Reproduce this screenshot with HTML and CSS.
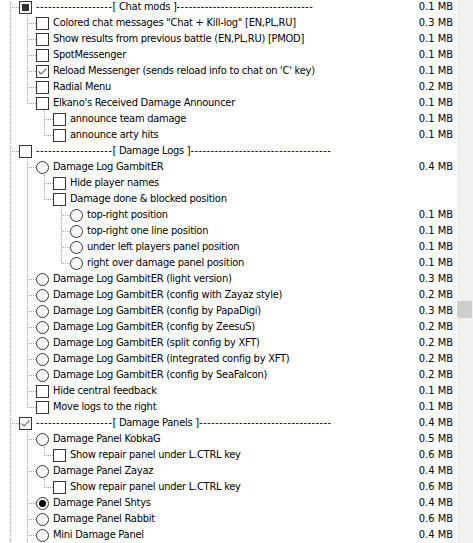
FILE: index.html
```html
<!DOCTYPE html>
<html>
<head>
<meta charset="utf-8">
<link rel="stylesheet" href="styles.css">
</head>
<body>
<div class="view">
  <div class="tree">
    <div class="row"><span class="g tee"></span><span class="cb mixed"></span><span class="lbl"><span class="dash">-------------------</span>[ Chat mods ]<span class="dash">----------------------------------</span></span><span class="size">0.1 MB</span></div>
    <div class="row"><span class="g pipe"></span><span class="g tee"></span><span class="cb"></span><span class="lbl">Colored chat messages "Chat + Kill-log" [EN,PL,RU]</span><span class="size">0.3 MB</span></div>
    <div class="row"><span class="g pipe"></span><span class="g tee"></span><span class="cb"></span><span class="lbl">Show results from previous battle (EN,PL,RU) [PMOD]</span><span class="size">0.1 MB</span></div>
    <div class="row"><span class="g pipe"></span><span class="g tee"></span><span class="cb"></span><span class="lbl">SpotMessenger</span><span class="size">0.1 MB</span></div>
    <div class="row"><span class="g pipe"></span><span class="g tee"></span><span class="cb checked"><svg viewBox="0 0 13 13" width="13" height="13"><polyline points="2.5,6.5 5,9 10.5,3.5" fill="none" stroke="#6e6e6e" stroke-width="1.1"/></svg></span><span class="lbl">Reload Messenger (sends reload info to chat on 'C' key)</span><span class="size">0.1 MB</span></div>
    <div class="row"><span class="g pipe"></span><span class="g tee"></span><span class="cb"></span><span class="lbl">Radial Menu</span><span class="size">0.2 MB</span></div>
    <div class="row"><span class="g pipe"></span><span class="g elbow"></span><span class="cb"></span><span class="lbl">Elkano's Received Damage Announcer</span><span class="size">0.1 MB</span></div>
    <div class="row"><span class="g pipe"></span><span class="g"></span><span class="g tee"></span><span class="cb"></span><span class="lbl">announce team damage</span><span class="size">0.1 MB</span></div>
    <div class="row"><span class="g pipe"></span><span class="g"></span><span class="g elbow"></span><span class="cb"></span><span class="lbl">announce arty hits</span><span class="size">0.1 MB</span></div>
    <div class="row"><span class="g tee"></span><span class="cb"></span><span class="lbl"><span class="dash">-------------------</span>[ Damage Logs ]<span class="dash">-----------------------------------</span></span><span class="size"></span></div>
    <div class="row"><span class="g pipe"></span><span class="g tee"></span><span class="rd"></span><span class="lbl">Damage Log GambitER</span><span class="size">0.4 MB</span></div>
    <div class="row"><span class="g pipe"></span><span class="g pipe"></span><span class="g tee"></span><span class="cb"></span><span class="lbl">Hide player names</span><span class="size"></span></div>
    <div class="row"><span class="g pipe"></span><span class="g pipe"></span><span class="g elbow"></span><span class="cb"></span><span class="lbl">Damage done &amp; blocked position</span><span class="size"></span></div>
    <div class="row"><span class="g pipe"></span><span class="g pipe"></span><span class="g"></span><span class="g tee"></span><span class="rd"></span><span class="lbl">top-right position</span><span class="size">0.1 MB</span></div>
    <div class="row"><span class="g pipe"></span><span class="g pipe"></span><span class="g"></span><span class="g tee"></span><span class="rd"></span><span class="lbl">top-right one line position</span><span class="size">0.1 MB</span></div>
    <div class="row"><span class="g pipe"></span><span class="g pipe"></span><span class="g"></span><span class="g tee"></span><span class="rd"></span><span class="lbl">under left players panel position</span><span class="size">0.1 MB</span></div>
    <div class="row"><span class="g pipe"></span><span class="g pipe"></span><span class="g"></span><span class="g elbow"></span><span class="rd"></span><span class="lbl">right over damage panel position</span><span class="size">0.1 MB</span></div>
    <div class="row"><span class="g pipe"></span><span class="g tee"></span><span class="rd"></span><span class="lbl">Damage Log GambitER (light version)</span><span class="size">0.3 MB</span></div>
    <div class="row"><span class="g pipe"></span><span class="g tee"></span><span class="rd"></span><span class="lbl">Damage Log GambitER (config with Zayaz style)</span><span class="size">0.2 MB</span></div>
    <div class="row"><span class="g pipe"></span><span class="g tee"></span><span class="rd"></span><span class="lbl">Damage Log GambitER (config by PapaDigi)</span><span class="size">0.3 MB</span></div>
    <div class="row"><span class="g pipe"></span><span class="g tee"></span><span class="rd"></span><span class="lbl">Damage Log GambitER (config by ZeesuS)</span><span class="size">0.2 MB</span></div>
    <div class="row"><span class="g pipe"></span><span class="g tee"></span><span class="rd"></span><span class="lbl">Damage Log GambitER (split config by XFT)</span><span class="size">0.2 MB</span></div>
    <div class="row"><span class="g pipe"></span><span class="g tee"></span><span class="rd"></span><span class="lbl">Damage Log GambitER (integrated config by XFT)</span><span class="size">0.2 MB</span></div>
    <div class="row"><span class="g pipe"></span><span class="g tee"></span><span class="rd"></span><span class="lbl">Damage Log GambitER (config by SeaFalcon)</span><span class="size">0.2 MB</span></div>
    <div class="row"><span class="g pipe"></span><span class="g tee"></span><span class="cb"></span><span class="lbl">Hide central feedback</span><span class="size">0.1 MB</span></div>
    <div class="row"><span class="g pipe"></span><span class="g elbow"></span><span class="cb"></span><span class="lbl">Move logs to the right</span><span class="size">0.1 MB</span></div>
    <div class="row"><span class="g tee"></span><span class="cb checked"><svg viewBox="0 0 13 13" width="13" height="13"><polyline points="2.5,6.5 5,9 10.5,3.5" fill="none" stroke="#6e6e6e" stroke-width="1.1"/></svg></span><span class="lbl"><span class="dash">-------------------</span>[ Damage Panels ]<span class="dash">---------------------------------</span></span><span class="size">0.4 MB</span></div>
    <div class="row"><span class="g pipe"></span><span class="g tee"></span><span class="rd"></span><span class="lbl">Damage Panel KobkaG</span><span class="size">0.5 MB</span></div>
    <div class="row"><span class="g pipe"></span><span class="g pipe"></span><span class="g elbow"></span><span class="cb"></span><span class="lbl">Show repair panel under L.CTRL key</span><span class="size">0.6 MB</span></div>
    <div class="row"><span class="g pipe"></span><span class="g tee"></span><span class="rd"></span><span class="lbl">Damage Panel Zayaz</span><span class="size">0.4 MB</span></div>
    <div class="row"><span class="g pipe"></span><span class="g pipe"></span><span class="g elbow"></span><span class="cb"></span><span class="lbl">Show repair panel under L.CTRL key</span><span class="size">0.6 MB</span></div>
    <div class="row"><span class="g pipe"></span><span class="g tee"></span><span class="rd on"></span><span class="lbl">Damage Panel Shtys</span><span class="size">0.4 MB</span></div>
    <div class="row"><span class="g pipe"></span><span class="g tee"></span><span class="rd"></span><span class="lbl">Damage Panel Rabbit</span><span class="size">0.6 MB</span></div>
    <div class="row"><span class="g pipe"></span><span class="g tee"></span><span class="rd"></span><span class="lbl">Mini Damage Panel</span><span class="size">0.4 MB</span></div>
  </div>
  <div class="scrollbar"><div class="thumb"></div></div>
</div>
</body>
</html>
```

FILE: styles.css
```css
html, body {
  margin: 0;
  padding: 0;
  background: #ffffff;
  overflow: hidden;
}

.view {
  display: flex;
  width: 473px;
  height: 543px;
  overflow: hidden;
}

.tree {
  flex: 1;
  margin-top: -1px;
  padding-left: 2px;
  font-family: "DejaVu Sans Condensed", "Liberation Sans", sans-serif;
  font-size: 11px;
  color: #000000;
}

.row {
  display: flex;
  align-items: flex-start;
  height: 16px;
  line-height: 16px;
  white-space: nowrap;
}

.g {
  flex: none;
  width: 17px;
  height: 16px;
}

.pipe {
  background: repeating-linear-gradient(to bottom, #a0a0a0 0 1px, transparent 1px 2px) 8px 0 / 1px 16px no-repeat;
}

.tee {
  background:
    repeating-linear-gradient(to bottom, #a0a0a0 0 1px, transparent 1px 2px) 8px 0 / 1px 16px no-repeat,
    repeating-linear-gradient(to right, #a0a0a0 0 1px, transparent 1px 2px) 8px 8px / 9px 1px no-repeat;
}

.elbow {
  background:
    repeating-linear-gradient(to bottom, #a0a0a0 0 1px, transparent 1px 2px) 8px 0 / 1px 9px no-repeat,
    repeating-linear-gradient(to right, #a0a0a0 0 1px, transparent 1px 2px) 8px 8px / 9px 1px no-repeat;
}

.cb {
  flex: none;
  box-sizing: border-box;
  width: 13px;
  height: 13px;
  margin-top: 2px;
  border: 1px solid #333333;
  background: #ffffff;
  display: flex;
  align-items: center;
  justify-content: center;
}

.cb svg {
  display: block;
  flex: none;
  margin: -1px;
}

.cb.mixed::before {
  content: "";
  width: 7px;
  height: 7px;
  background: #333333;
}

.rd {
  flex: none;
  box-sizing: border-box;
  width: 13px;
  height: 13px;
  margin-top: 2px;
  border: 1px solid #333333;
  border-radius: 50%;
  background: #ffffff;
  display: flex;
  align-items: center;
  justify-content: center;
}

.rd.on::before {
  content: "";
  width: 7px;
  height: 7px;
  border-radius: 50%;
  background: #000000;
}

.lbl {
  flex: 1;
  padding-left: 4px;
  overflow: hidden;
  letter-spacing: -0.25px;
}

.dash {
  letter-spacing: 0.45px;
}

.size {
  flex: none;
  padding-right: 4px;
  text-align: right;
}

.scrollbar {
  flex: none;
  width: 16px;
  height: 543px;
  background: #f0f0f0;
}

.thumb {
  width: 15px;
  height: 17px;
  margin-top: 301px;
  background: #cdcdcd;
}
```
